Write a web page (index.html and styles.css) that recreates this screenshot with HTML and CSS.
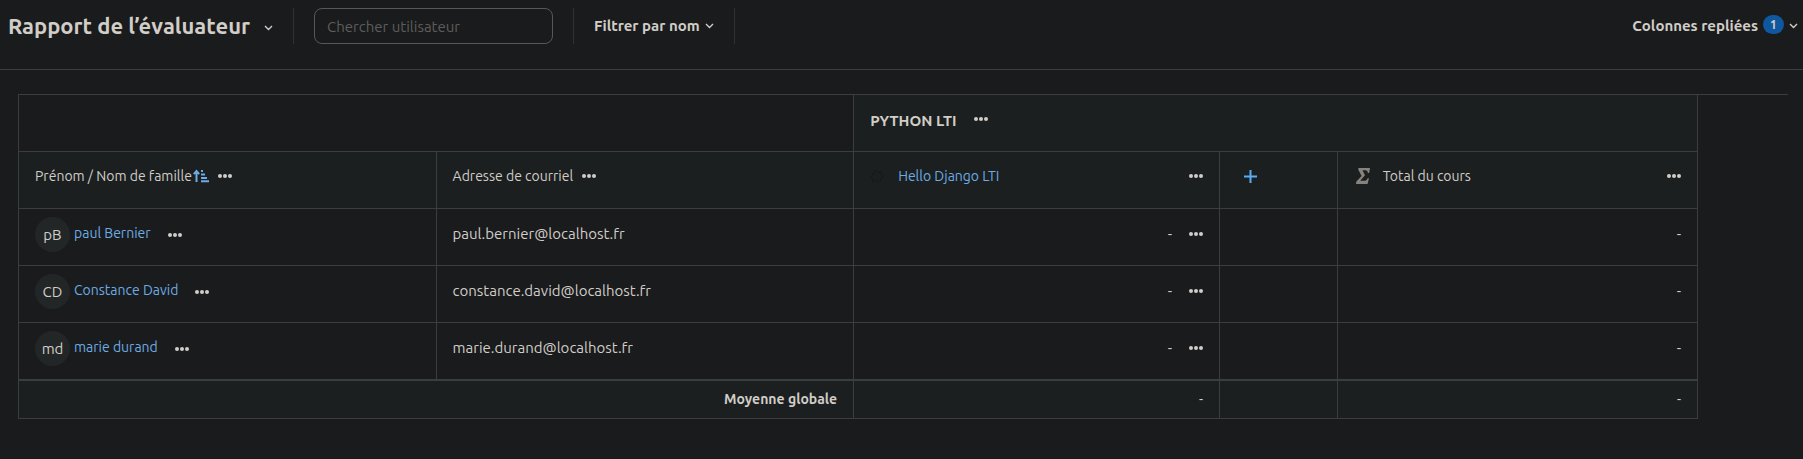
FILE: index.html
```html
<!DOCTYPE html>
<html lang="fr">
<head>
    <meta charset="UTF-8">
    <meta name="viewport" content="width=device-width, initial-scale=1.0">
    <title>Rapport de l’évaluateur</title>
    <link rel="stylesheet" href="styles.css">
</head>
<body>
    <!-- Shared icons -->
    <svg class="sprite" aria-hidden="true">
        <symbol id="dots" viewBox="0 0 14 4">
            <circle cx="2" cy="2" r="2"/><circle cx="7" cy="2" r="2"/><circle cx="12" cy="2" r="2"/>
        </symbol>
        <symbol id="chevron" viewBox="0 0 9 6">
            <path d="M1 1l3.5 3.5L8 1" fill="none" stroke="currentColor" stroke-width="1.4"/>
        </symbol>
    </svg>

    <header class="toolbar">
        <h1><button class="title-button">Rapport de l’évaluateur <svg class="chevron"><use href="#chevron"/></svg></button></h1>
        <span class="divider"></span>
        <input class="search" type="text" placeholder="Chercher utilisateur" aria-label="Chercher utilisateur">
        <span class="divider"></span>
        <button class="menu-button filter">Filtrer par nom <svg class="chevron"><use href="#chevron"/></svg></button>
        <span class="divider"></span>
        <button class="menu-button collapsed">Colonnes repliées <span class="badge">1</span> <svg class="chevron"><use href="#chevron"/></svg></button>
    </header>

    <main class="report">
        <table class="grades">
            <colgroup>
                <col class="col-name">
                <col class="col-email">
                <col class="col-item">
                <col class="col-add">
                <col class="col-total">
            </colgroup>
            <thead>
                <tr>
                    <td colspan="2"></td>
                    <th class="shaded" colspan="3" scope="colgroup">
                        <div class="cell course">PYTHON LTI <button class="dots" aria-label="Actions"><svg><use href="#dots"/></svg></button></div>
                    </th>
                </tr>
                <tr class="shaded">
                    <th scope="col">
                        <div class="cell heading">
                            <span>Prénom / Nom de famille</span>
                            <svg class="sort" viewBox="0 0 16 14">
                                <path d="M3.5 13V2M.8 5.200L3.500 2l2.700 3.200" fill="none" stroke="currentColor" stroke-width="2"/>
                                <path d="M8 1h2v2H8zM8 4.500h4v2H8zM8 8h6v2H8zM8 11.200h8v2H8z" fill="currentColor"/>
                            </svg>
                            <button class="dots" aria-label="Actions"><svg><use href="#dots"/></svg></button>
                        </div>
                    </th>
                    <th scope="col">
                        <div class="cell heading">
                            <span>Adresse de courriel</span>
                            <button class="dots" aria-label="Actions"><svg><use href="#dots"/></svg></button>
                        </div>
                    </th>
                    <th scope="col">
                        <div class="cell heading">
                            <svg class="activity" viewBox="0 0 14 14">
                                <path d="M2 4.500h2.500C3.500 1 8 .5 8 3.500l3-1 .5 3c2.500.5 2 4-.5 3.500l-.5 3.500H8c0-2.500-3-2.500-3 0H2.500L3 9.500C.5 9.500.5 7 2.500 7z" fill="none" stroke="currentColor"/>
                            </svg>
                            <a href="#">Hello Django LTI</a>
                            <button class="dots end" aria-label="Actions"><svg><use href="#dots"/></svg></button>
                        </div>
                    </th>
                    <th scope="col">
                        <div class="cell heading">
                            <button class="add" aria-label="Ajouter">
                                <svg viewBox="0 0 13 13"><path d="M6.500 0v13M0 6.500h13" stroke="currentColor" stroke-width="2"/></svg>
                            </button>
                        </div>
                    </th>
                    <th scope="col">
                        <div class="cell heading">
                            <svg class="sigma" viewBox="0 0 14 16">
                                <path d="M2.500 0H14l-.8 5h-1.400c0-2-.8-2.800-2.800-2.800H6.500L9 7.200 4.200 12.800H8c2 0 2.800-.8 3.600-2.600H13L11.500 16H0l.4-2.600L5.600 8 2.200 1.500z" fill="currentColor"/>
                            </svg>
                            <span>Total du cours</span>
                            <button class="dots end" aria-label="Actions"><svg><use href="#dots"/></svg></button>
                        </div>
                    </th>
                </tr>
            </thead>
            <tbody>
                <tr>
                    <th scope="row">
                        <div class="cell user"><span class="avatar">pB</span><a href="#">paul Bernier</a><button class="dots" aria-label="Actions"><svg><use href="#dots"/></svg></button></div>
                    </th>
                    <td><div class="cell email">paul.bernier@localhost.fr</div></td>
                    <td><div class="cell grade">-<button class="dots" aria-label="Actions"><svg><use href="#dots"/></svg></button></div></td>
                    <td></td>
                    <td><div class="cell grade">-</div></td>
                </tr>
                <tr>
                    <th scope="row">
                        <div class="cell user"><span class="avatar">CD</span><a href="#">Constance David</a><button class="dots" aria-label="Actions"><svg><use href="#dots"/></svg></button></div>
                    </th>
                    <td><div class="cell email">constance.david@localhost.fr</div></td>
                    <td><div class="cell grade">-<button class="dots" aria-label="Actions"><svg><use href="#dots"/></svg></button></div></td>
                    <td></td>
                    <td><div class="cell grade">-</div></td>
                </tr>
                <tr>
                    <th scope="row">
                        <div class="cell user"><span class="avatar">md</span><a href="#">marie durand</a><button class="dots" aria-label="Actions"><svg><use href="#dots"/></svg></button></div>
                    </th>
                    <td><div class="cell email">marie.durand@localhost.fr</div></td>
                    <td><div class="cell grade">-<button class="dots" aria-label="Actions"><svg><use href="#dots"/></svg></button></div></td>
                    <td></td>
                    <td><div class="cell grade">-</div></td>
                </tr>
            </tbody>
            <tfoot>
                <tr class="shaded">
                    <th class="average" colspan="2" scope="row">Moyenne globale</th>
                    <td>-</td>
                    <td></td>
                    <td>-</td>
                </tr>
            </tfoot>
        </table>
    </main>
</body>
</html>
```
FILE: styles.css
```css
* {
    box-sizing: border-box;
}
body {
    margin: 0;
    min-height: 100vh;
    background-color: #1a1b1d;
    color: #d1cdc7;
    font-family: Ubuntu, "Noto Sans", sans-serif;
    font-size: 14px;
    line-height: 20px;
}
button {
    padding: 0;
    border: 0;
    background: none;
    color: inherit;
    font: inherit;
    cursor: pointer;
}
a {
    color: #6cace4;
    text-decoration: none;
}
.sprite {
    display: none;
}

/* Toolbar */
.toolbar {
    display: flex;
    align-items: flex-start;
    height: 70px;
    padding: 8px 5px 0 8px;
    border-bottom: 1px solid #3a3e41;
}
.toolbar h1 {
    margin: 0;
    font-size: 22px;
    font-weight: 600;
    line-height: 36px;
}
.title-button {
    display: flex;
    align-items: center;
    gap: 14px;
}
.chevron {
    width: 9px;
    height: 6px;
}
.title-button .chevron {
    margin-top: 4px;
}
.divider {
    width: 1px;
    height: 36px;
    margin: 0 20px;
    background-color: #2e3133;
}
.search {
    width: 239px;
    height: 36px;
    padding: 0 12px;
    border: 1px solid #54585b;
    border-radius: 8px;
    background: none;
    color: inherit;
    font: inherit;
    font-size: 15px;
}
.search::placeholder {
    color: #5e5d5a;
    opacity: 1;
}
.menu-button {
    display: flex;
    align-items: center;
    gap: 5px;
    height: 36px;
    font-size: 15px;
    font-weight: 600;
}
.collapsed {
    margin-left: auto;
}
.badge {
    width: 21px;
    height: 19px;
    margin-bottom: 4px;
    border-radius: 10px;
    background-color: #0f589f;
    font-size: 12px;
    font-weight: 700;
    line-height: 19px;
}

/* Grades */
.report {
    margin: 24px 15px 0 18px;
    border-top: 1px solid #3a3e41;
}
.grades {
    width: calc(100% - 90px);
    margin-top: -1px;
    table-layout: fixed;
    border-collapse: collapse;
}
.col-name, .col-email {
    width: 24.87%;
}
.col-item {
    width: 21.8%;
}
.col-add {
    width: 7%;
}
.grades th, .grades td {
    height: 57px;
    padding: 0 16px;
    border: 1px solid #3a3e41;
    font-weight: 400;
    text-align: left;
    vertical-align: top;
}
.shaded {
    background-color: #1b1f20;
}
.cell {
    display: flex;
    align-items: center;
}
.dots {
    display: flex;
    align-items: center;
    height: 20px;
    margin-left: 9px;
}
.dots svg {
    width: 14px;
    height: 4px;
    fill: currentColor;
}
.dots.end {
    margin-left: auto;
}
.course {
    align-items: flex-start;
    padding-top: 16px;
    font-size: 15px;
    font-weight: 600;
}
.course .dots {
    height: 16px;
    margin-left: 17px;
}
.heading {
    padding-top: 14px;
}
.sort {
    width: 16px;
    height: 14px;
    margin-left: 1px;
    color: #6cace4;
}
.activity {
    width: 14px;
    height: 14px;
    margin-right: 14px;
    color: #16191a;
}
.add {
    display: flex;
    align-items: center;
    height: 20px;
    margin-left: 8px;
    color: #58aef5;
}
.add svg {
    width: 13px;
    height: 13px;
}
.sigma {
    width: 14px;
    height: 16px;
    margin: 0 13px 0 2px;
    color: #86837f;
}
.user {
    padding-top: 8px;
}
.user a {
    padding-bottom: 3px;
}
.avatar {
    width: 35px;
    height: 35px;
    margin-right: 4px;
    border-radius: 50%;
    background-color: #222627;
    font-size: 15px;
    line-height: 35px;
    text-align: center;
}
.user .dots, .grade .dots {
    margin-left: 17px;
}
.email, .grade {
    padding-top: 15px;
    font-size: 15px;
}
.grade {
    justify-content: flex-end;
}
.grades tfoot th, .grades tfoot td {
    height: 39px;
    padding: 8px 16px;
    border-top-width: 2px;
    text-align: right;
}
.grades .average {
    font-weight: 600;
}
```
